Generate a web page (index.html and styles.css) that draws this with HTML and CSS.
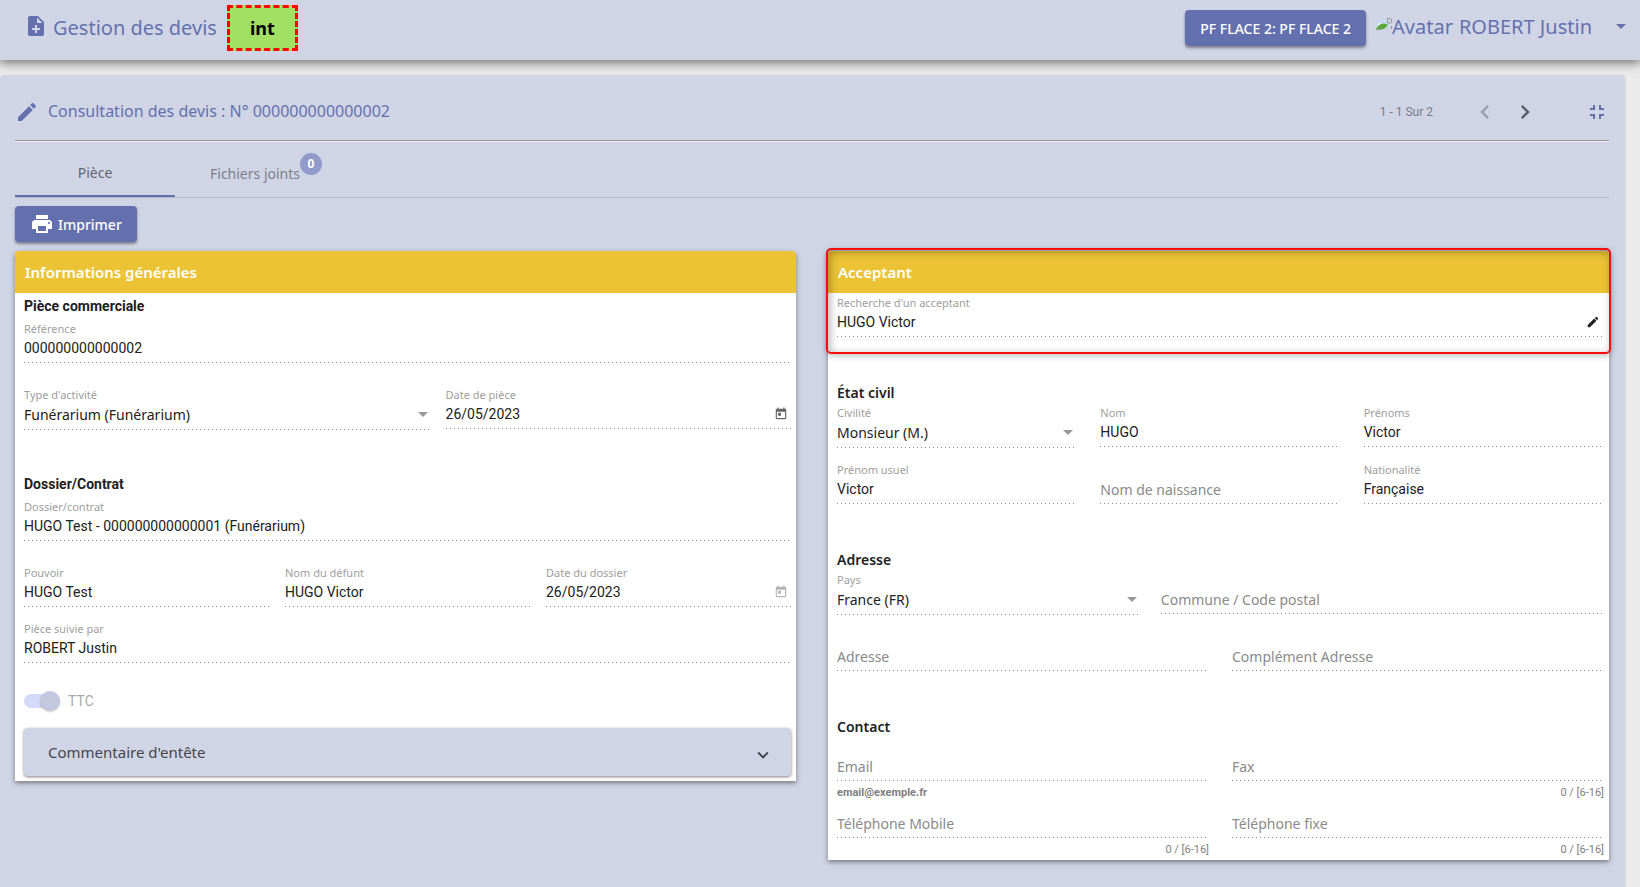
FILE: index.html
```
<!DOCTYPE html>
<html lang="fr">
<head>
  <meta charset="UTF-8" />
  <meta name="viewport" content="width=device-width, initial-scale=1" />
  <title>Gestion des devis</title>
  <link rel="stylesheet" href="styles.css">
</head>
<body>
  <svg class="sprite" aria-hidden="true">
    <symbol id="i-note" viewBox="0 0 24 24"><path d="M14 2H6c-1.1 0-1.99.9-1.99 2L4 20c0 1.1.89 2 1.99 2H18c1.1 0 2-.9 2-2V8l-6-6zm2 14h-3v3h-2v-3H8v-2h3v-3h2v3h3v2zm-3-7V3.500L18.500 9H13z"/></symbol>
    <symbol id="i-edit" viewBox="0 0 24 24"><path d="M3 17.250V21h3.750L17.810 9.940l-3.750-3.750L3 17.250zM20.710 7.040c.39-.39.39-1.020 0-1.410l-2.340-2.340c-.39-.39-1.020-.39-1.410 0l-1.830 1.830 3.750 3.750 1.830-1.830z"/></symbol>
    <symbol id="i-print" viewBox="0 0 24 24"><path d="M19 8H5c-1.660 0-3 1.340-3 3v6h4v4h12v-4h4v-6c0-1.660-1.340-3-3-3zm-3 11H8v-5h8v5zm3-7c-.55 0-1-.45-1-1s.45-1 1-1 1 .45 1 1-.45 1-1 1zm-1-9H6v4h12V3z"/></symbol>
    <symbol id="i-left" viewBox="0 0 24 24"><path d="M15.410 7.410L14 6l-6 6 6 6 1.410-1.410L10.830 12z"/></symbol>
    <symbol id="i-right" viewBox="0 0 24 24"><path d="M10 6L8.590 7.410 13.170 12l-4.580 4.590L10 18l6-6z"/></symbol>
    <symbol id="i-down" viewBox="0 0 24 24"><path d="M16.590 8.590L12 13.170 7.410 8.590 6 10l6 6 6-6z"/></symbol>
    <symbol id="i-exit" viewBox="0 0 24 24"><path d="M5 16h3v3h2v-5H5v2zm3-8H5v2h5V5H8v3zm6 11h2v-3h3v-2h-5v5zm2-11V5h-2v5h5V8h-3z"/></symbol>
    <symbol id="i-date" viewBox="0 0 24 24"><path d="M19 3h-1V1h-2v2H8V1H6v2H5c-1.110 0-1.990.9-1.990 2L3 19c0 1.100.89 2 2 2h14c1.100 0 2-.9 2-2V5c0-1.100-.9-2-2-2zm0 16H5V8h14v11zM7 10h5v5H7z"/></symbol>
  </svg>

  <header class="topbar">
    <svg class="icon"><use href="#i-note"/></svg>
    <h1>Gestion des devis</h1>
    <span class="env">int</span>
    <button type="button" class="btn site">PF FLACE 2: PF FLACE 2</button>
    <button type="button" class="user">
      <svg class="broken" viewBox="0 0 16 16">
        <path fill="#c4d9f5" d="M1 3h9l3 5-6 4H1z"/>
        <path fill="#fff" d="M2 8c0-2 3-3 4-1 2-1 4 0 4 1z"/>
        <path fill="#58a83c" d="M0 12c3-5 7-7 12-4l-4 4z"/>
        <path fill="none" stroke="#9a9a9a" d="M0 12.500h6M11 1.500h4M15.500 2v3M11.500 2v4h4M15.500 9v3"/>
      </svg>
      <span class="alt">Avatar</span>
      <span>ROBERT Justin</span>
      <i class="arrow"></i>
    </button>
  </header>

  <main class="panel">
    <div class="panel-title">
      <svg class="icon"><use href="#i-edit"/></svg>
      <h2>Consultation des devis : N° 000000000000002</h2>
      <span class="range">1 - 1 Sur 2</span>
      <button type="button" class="nav" aria-label="Précédent" disabled><svg><use href="#i-left"/></svg></button>
      <button type="button" class="nav" aria-label="Suivant"><svg><use href="#i-right"/></svg></button>
      <button type="button" class="exit" aria-label="Réduire"><svg class="icon"><use href="#i-exit"/></svg></button>
    </div>

    <nav class="tabs" role="tablist">
      <button type="button" class="tab active" role="tab" aria-selected="true">Pièce</button>
      <button type="button" class="tab" role="tab" aria-selected="false"><span class="tab-label">Fichiers joints<span class="badge">0</span></span></button>
    </nav>

    <button type="button" class="btn print"><svg><use href="#i-print"/></svg>Imprimer</button>

    <div class="cards">
      <section class="card general">
        <h3>Informations générales</h3>
        <div class="body">
          <h4>Pièce commerciale</h4>
          <div class="field">
            <label for="reference">Référence</label>
            <div class="control"><input id="reference" type="text" value="000000000000002" readonly></div>
          </div>
          <div class="row type">
            <div class="field">
              <label for="activite">Type d'activité</label>
              <div class="control list"><select id="activite"><option>Funérarium (Funérarium)</option></select><i class="arrow"></i></div>
            </div>
            <div class="field">
              <label for="date-piece">Date de pièce</label>
              <div class="control"><input id="date-piece" type="text" value="26/05/2023"><button type="button" aria-label="Calendrier"><svg><use href="#i-date"/></svg></button></div>
            </div>
          </div>

          <h4>Dossier/Contrat</h4>
          <div class="field">
            <label for="dossier">Dossier/contrat</label>
            <div class="control"><input id="dossier" type="text" value="HUGO Test - 000000000000001 (Funérarium)" readonly></div>
          </div>
          <div class="row three">
            <div class="field">
              <label for="pouvoir">Pouvoir</label>
              <div class="control"><input id="pouvoir" type="text" value="HUGO Test" readonly></div>
            </div>
            <div class="field">
              <label for="defunt">Nom du défunt</label>
              <div class="control"><input id="defunt" type="text" value="HUGO Victor" readonly></div>
            </div>
            <div class="field">
              <label for="date-dossier">Date du dossier</label>
              <div class="control"><input id="date-dossier" type="text" value="26/05/2023" readonly><button type="button" aria-label="Calendrier" disabled><svg><use href="#i-date"/></svg></button></div>
            </div>
          </div>
          <div class="field suivi">
            <label for="suivi">Pièce suivie par</label>
            <div class="control"><input id="suivi" type="text" value="ROBERT Justin" readonly></div>
          </div>

          <label class="toggle"><input type="checkbox" checked disabled>TTC</label>

          <button type="button" class="expand" aria-expanded="false">Commentaire d'entête<svg><use href="#i-down"/></svg></button>
        </div>
      </section>

      <section class="card acceptant">
        <div class="search">
          <h3>Acceptant</h3>
          <div class="field">
            <label for="recherche">Recherche d'un acceptant</label>
            <div class="control"><input id="recherche" type="text" value="HUGO Victor"><button type="button" class="edit" aria-label="Modifier"><svg><use href="#i-edit"/></svg></button></div>
          </div>
        </div>
        <div class="body">
          <h4>État civil</h4>
          <div class="row three">
            <div class="field">
              <label for="civilite">Civilité</label>
              <div class="control list"><select id="civilite"><option>Monsieur (M.)</option></select><i class="arrow"></i></div>
            </div>
            <div class="field">
              <label for="nom">Nom</label>
              <div class="control"><input id="nom" type="text" value="HUGO"></div>
            </div>
            <div class="field">
              <label for="prenoms">Prénoms</label>
              <div class="control"><input id="prenoms" type="text" value="Victor"></div>
            </div>
          </div>
          <div class="row three">
            <div class="field">
              <label for="usuel">Prénom usuel</label>
              <div class="control"><input id="usuel" type="text" value="Victor"></div>
            </div>
            <div class="field empty">
              <div class="control"><input type="text" placeholder="Nom de naissance" aria-label="Nom de naissance"></div>
            </div>
            <div class="field">
              <label for="nationalite">Nationalité</label>
              <div class="control"><input id="nationalite" type="text" value="Française"></div>
            </div>
          </div>

          <h4>Adresse</h4>
          <div class="row pays">
            <div class="field">
              <label for="pays">Pays</label>
              <div class="control list"><select id="pays"><option>France (FR)</option></select><i class="arrow"></i></div>
            </div>
            <div class="field empty">
              <div class="control"><input type="text" placeholder="Commune / Code postal" aria-label="Commune / Code postal"></div>
            </div>
          </div>
          <div class="row two">
            <div class="field empty">
              <div class="control"><input type="text" placeholder="Adresse" aria-label="Adresse"></div>
            </div>
            <div class="field empty">
              <div class="control"><input type="text" placeholder="Complément Adresse" aria-label="Complément Adresse"></div>
            </div>
          </div>

          <h4>Contact</h4>
          <div class="row two contact">
            <div class="field empty">
              <div class="control"><input type="email" placeholder="Email" aria-label="Email"></div>
              <p class="hint"><b>email@exemple.fr</b></p>
            </div>
            <div class="field empty">
              <div class="control"><input type="tel" placeholder="Fax" aria-label="Fax"></div>
              <p class="hint count">0 / [6-16]</p>
            </div>
            <div class="field empty">
              <div class="control"><input type="tel" placeholder="Téléphone Mobile" aria-label="Téléphone Mobile"></div>
              <p class="hint count">0 / [6-16]</p>
            </div>
            <div class="field empty">
              <div class="control"><input type="tel" placeholder="Téléphone fixe" aria-label="Téléphone fixe"></div>
              <p class="hint count">0 / [6-16]</p>
            </div>
          </div>
        </div>
      </section>
    </div>
  </main>
</body>
</html>
```
FILE: styles.css
```
* {
  box-sizing: border-box;
}

body {
  margin: 0;
  min-height: 100vh;
  display: flex;
  flex-direction: column;
  background: #ebebeb;
  color: #212121;
  font-family: 'Noto Sans', sans-serif;
  font-size: 14px;
}

h1, h2, h3, h4, p {
  margin: 0;
}

button {
  border: none;
  background: none;
  padding: 0;
  font-family: inherit;
  color: inherit;
  cursor: pointer;
}

svg {
  display: block;
  fill: currentColor;
}

.sprite {
  display: none;
}

.icon {
  width: 24px;
  height: 24px;
}

.arrow {
  border: 5px solid transparent;
  border-top-color: currentColor;
  border-bottom: none;
}

/* Barre du haut */
.topbar {
  display: flex;
  align-items: center;
  height: 60px;
  padding: 0 14px 4px 24px;
  background: #d0d5e6;
  color: #6470ae;
  box-shadow: 0 2px 10px 1px rgba(0,0,0,0.5);
}

.topbar .icon {
  margin: 0 5px 4px 0;
}

.topbar h1 {
  padding-bottom: 2px;
  font-size: 20px;
  font-weight: 400;
}

.env {
  margin-left: 10px;
  padding: 6px 20px;
  border: 3px dashed #f00;
  background: #a1e063;
  color: #000;
  font-size: 18px;
  line-height: 28px;
  font-weight: 700;
}

.btn {
  height: 36px;
  border-radius: 4px;
  background: #6470ae;
  color: #fff;
  font-size: 14px;
  font-weight: 500;
  box-shadow: 0 2px 3px rgba(0,0,0,0.4);
}

.site {
  margin-left: auto;
  padding: 0 15px;
}

.user {
  display: flex;
  align-items: center;
  margin-left: 10px;
  padding-bottom: 3px;
  font-size: 20px;
}

.user .arrow {
  margin-left: 24px;
}

.broken {
  width: 16px;
  height: 16px;
  margin-bottom: 4px;
}

.alt {
  margin-right: 6px;
}

/* Panneau principal */
.panel {
  flex: 1;
  margin: 15px 15px 0 0;
  padding: 0 16px 27px 15px;
  border-radius: 4px 4px 0 0;
  background: #d0d5e6;
  box-shadow: 0 1px 3px rgba(0,0,0,0.15);
}

.panel-title {
  display: flex;
  align-items: center;
  height: 66px;
  padding-top: 8px;
  border-top: none;
  border-bottom: 1px solid #999;
  box-shadow: 0 1px #eee;
  color: #6470ae;
}

.panel-title h2 {
  margin: 0 auto 0 9px;
  padding-bottom: 2px;
  font-size: 16px;
  font-weight: 400;
}

.range {
  margin-right: 38px;
  color: #777b88;
  font-family: Roboto, sans-serif;
  font-size: 12px;
}

.nav {
  width: 28px;
  margin-right: 12px;
  color: #5b5d66;
}

.nav svg {
  width: 28px;
  height: 28px;
}

.nav:disabled {
  color: #9a9eae;
}

.exit {
  margin: 0 0 0 34px;
}

.tabs {
  display: flex;
  height: 57px;
  border-bottom: 1px solid #b6bacb;
}

.tab {
  width: 160px;
  padding-top: 9px;
  color: #7b7e8a;
  font-size: 14px;
}

.tab.active {
  border-bottom: 2px solid #6470ae;
  color: #62646e;
}

.tab-label {
  position: relative;
}

.badge {
  position: absolute;
  left: 100%;
  bottom: 8px;
  width: 22px;
  border-radius: 50%;
  background: #919bc9;
  color: #fff;
  font-size: 12px;
  font-weight: 700;
  line-height: 22px;
}

.print {
  display: flex;
  align-items: center;
  gap: 4px;
  margin: 8px 0 9px;
  padding: 0 15px;
}

.print svg {
  width: 24px;
  height: 24px;
}

/* Cartes */
.cards {
  display: grid;
  grid-template-columns: 1fr 1fr;
  align-items: start;
  gap: 32px;
}

.card {
  border-radius: 4px 4px 0 0;
  background: #fff;
  box-shadow: 0 2px 5px rgba(0,0,0,0.45);
}

.card h3 {
  padding: 0 10px;
  border-radius: 4px 4px 0 0;
  background: #ebc334;
  color: #fff;
  font-size: 15px;
  font-weight: 600;
  line-height: 42px;
}

.card h4 {
  margin: 46px 0 2px;
  font-size: 14px;
  font-weight: 600;
  line-height: 20px;
}

.general .body {
  padding: 3px 5px 5px 9px;
}

.general h4 {
  margin: 44px 0 5px;
  font-family: Roboto, sans-serif;
  font-weight: 700;
}

.card h4:first-child {
  margin-top: 0;
}

.acceptant .body {
  padding: 31px 7px 7px 9px;
}

/* Cadre rouge autour de la recherche */
.search {
  position: relative;
  padding-bottom: 15px;
}

.search .field {
  margin: 2px 7px 0 9px;
}

.search::after {
  content: '';
  position: absolute;
  inset: -3px -2px -2px;
  border: 2px solid #f50d0d;
  border-radius: 5px;
  box-shadow: 0 2px 6px rgba(0,0,0,0.25), inset 2px 2px 8px rgba(0,0,0,0.3);
  pointer-events: none;
}

/* Champs */
.row {
  display: grid;
  align-items: start;
  gap: 0 25px;
}

.three {
  grid-template-columns: repeat(3, 1fr);
}

.two {
  grid-template-columns: repeat(2, 1fr);
}

.row.type {
  grid-template-columns: 27fr 23fr;
}

.row.pays {
  grid-template-columns: 13fr 19fr;
  column-gap: 22px;
}

.general .row {
  gap: 16px;
  margin-top: 24px;
}

.acceptant .row + .row {
  margin-top: 14px;
}

.suivi {
  margin-top: 14px;
}

.field label {
  display: block;
  color: #9e9e9e;
  font-size: 11px;
  line-height: 16px;
}

.field.empty {
  padding-top: 16px;
}

.control {
  display: flex;
  align-items: center;
  height: 26px;
  padding-bottom: 4px;
  background: linear-gradient(to right, #8f8f8f 25%, transparent 25%) bottom left / 4px 1px repeat-x;
}

.control.list {
  height: 27px;
}

.empty .control {
  padding-bottom: 2px;
}

.control input,
.control select {
  flex: 1;
  min-width: 0;
  width: 100%;
  height: 22px;
  padding: 0;
  border: none;
  outline: none;
  background: none;
  appearance: none;
  color: #212121;
  font-family: Roboto, sans-serif;
  font-size: 14px;
}

.control select {
  font-family: 'Noto Sans', sans-serif;
}

.control input::placeholder {
  color: #8a8a8a;
  font-family: 'Noto Sans', sans-serif;
}

.control .arrow {
  margin-right: 2px;
  color: #999;
}

.control button {
  margin-right: 3px;
  color: #666;
}

.control button:disabled {
  color: #b5b5b5;
}

.control button.edit {
  margin-right: 2px;
  color: #212121;
}

.control button svg {
  width: 14px;
  height: 14px;
}

.hint {
  height: 15px;
  padding-top: 4px;
  color: #808080;
  font-family: Roboto, sans-serif;
  font-size: 11px;
  line-height: 15px;
}

.hint.count {
  margin-right: -2px;
  text-align: right;
}

.toggle {
  display: flex;
  align-items: center;
  gap: 8px;
  margin: 28px 0 17px;
  color: #aaa;
  font-family: Roboto, sans-serif;
  line-height: 20px;
}

.toggle input {
  display: flex;
  justify-content: flex-end;
  align-items: center;
  appearance: none;
  width: 36px;
  height: 14px;
  margin: 0;
  border-radius: 7px;
  background: #d4daf9;
}

.toggle input::before {
  content: '';
  width: 20px;
  height: 20px;
  border-radius: 50%;
  background: #c3c8df;
  box-shadow: 0 1px 2px rgba(0,0,0,0.2);
}

.expand {
  display: flex;
  align-items: center;
  justify-content: space-between;
  width: 100%;
  height: 48px;
  padding: 0 17px 0 24px;
  border-radius: 4px;
  background: #d0d5e6;
  color: #43454c;
  font-size: 15px;
  box-shadow: 0 1px 3px rgba(0,0,0,0.5);
}

.expand svg {
  width: 22px;
  height: 22px;
  margin-top: 6px;
}
```
